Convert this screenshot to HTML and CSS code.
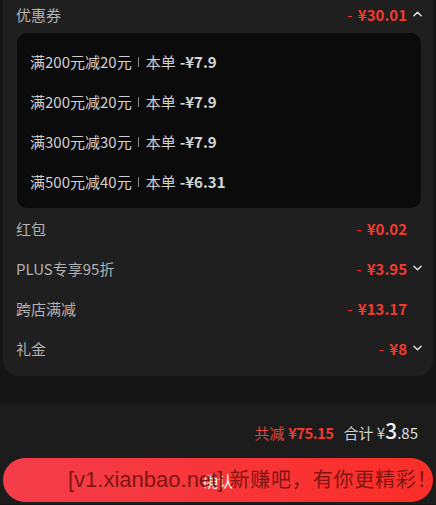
FILE: index.html
```html
<!DOCTYPE html>
<html lang="zh-CN">
<head>
    <meta charset="UTF-8">
    <meta name="viewport" content="width=device-width, initial-scale=1.0">
    <title>优惠明细</title>
    <link rel="stylesheet" href="styles.css">
</head>
<body>
    <div class="card">
        <div class="row head">
            <span class="label">优惠券</span>
            <span class="amount">- <b>¥30.01</b></span>
            <svg class="arrow" viewBox="0 0 10 6"><polyline points="1,5 5,1 9,5"/></svg>
        </div>

        <div class="coupons">
            <div class="coupon">满200元减20元<i class="sep"></i>本单 <b>-¥7.9</b></div>
            <div class="coupon">满200元减20元<i class="sep"></i>本单 <b>-¥7.9</b></div>
            <div class="coupon">满300元减30元<i class="sep"></i>本单 <b>-¥7.9</b></div>
            <div class="coupon">满500元减40元<i class="sep"></i>本单 <b>-¥6.31</b></div>
        </div>

        <div class="row">
            <span class="label">红包</span>
            <span class="amount">- <b>¥0.02</b></span>
            <span class="arrow-space"></span>
        </div>
        <div class="row">
            <span class="label">PLUS专享95折</span>
            <span class="amount">- <b>¥3.95</b></span>
            <svg class="arrow" viewBox="0 0 10 6"><polyline points="1,1 5,5 9,1"/></svg>
        </div>
        <div class="row">
            <span class="label">跨店满减</span>
            <span class="amount">- <b>¥13.17</b></span>
            <span class="arrow-space"></span>
        </div>
        <div class="row">
            <span class="label">礼金</span>
            <span class="amount">- <b>¥8</b></span>
            <svg class="arrow" viewBox="0 0 10 6"><polyline points="1,1 5,5 9,1"/></svg>
        </div>
    </div>

    <div class="footer">
        <div class="total">
            <span class="saved">共减 <b>¥75.15</b></span>
            <span class="sum">合计 <span class="yen">¥</span><b>3</b><span class="cents">.85</span></span>
        </div>
        <div class="btn-wrap">
            <button class="confirm">确认</button>
            <div class="watermark">[v1.xianbao.net] <span class="wm-cn">新赚吧，有你更精彩！</span></div>
        </div>
    </div>
</body>
</html>
```

FILE: styles.css
```css
body {
    margin: 0;
    background: #151515;
    font-family: "Noto Sans CJK SC", "Noto Sans", sans-serif;
    color: #bdbdbd;
    width: 436px;
    height: 505px;
    overflow: hidden;
}
.card {
    margin: 0 3px;
    background: #1f1f1f;
    border-radius: 0 0 16px 16px;
    padding: 0 0 8px;
}
.row {
    display: flex;
    align-items: center;
    height: 40px;
    padding: 0 11px 0 13px;
    font-size: 15px;
}
.row.head {
    height: 28px;
}
.label {
    flex: 1;
    color: #b3b3b3;
}
.amount {
    color: #f2352c;
    word-spacing: 2px;
}
.amount b {
    color: #f43a2f;
}
.arrow, .arrow-space {
    width: 9px;
    height: 6px;
    margin-left: 6px;
}
.arrow polyline {
    fill: none;
    stroke: #e6e6e6;
    stroke-width: 1.6;
    stroke-linecap: round;
    stroke-linejoin: round;
}
.coupons {
    margin: 5px 12px 0 14px;
    background: #0b0b0b;
    border-radius: 10px;
    padding: 8px 0 7px;
}
.coupon {
    height: 40px;
    display: flex;
    align-items: center;
    padding-left: 13px;
    font-size: 15px;
    color: #cfcfcf;
}
.coupon b {
    margin-left: 4px;
    color: #d6d6d6;
}
.sep {
    display: inline-block;
    width: 1px;
    height: 10px;
    background: #8a8a8a;
    margin: 2px 7px 0 6px;
}
.footer {
    margin-top: 29px;
    background: #1c1c1c;
    height: 99px;
    padding-top: 10px;
    box-sizing: border-box;
}
.total {
    display: flex;
    justify-content: flex-end;
    align-items: baseline;
    padding-right: 18px;
    height: 22px;
    font-size: 15px;
}
.saved {
    color: #e0453a;
}
.saved b {
    color: #ee3a2e;
    letter-spacing: -0.6px;
}
.sum {
    margin-left: 10px;
    color: #d0d0d0;
}
.sum b {
    font-size: 21px;
    font-weight: 500;
    color: #f0f0f0;
}
.sum .cents {
    font-size: 15px;
    color: #e0e0e0;
}
.btn-wrap {
    position: relative;
    margin: 21px 3px 0;
}
.confirm {
    display: block;
    width: 100%;
    height: 44px;
    border: none;
    border-radius: 22px;
    background: linear-gradient(90deg, #f43d4a, #fb2e27);
    color: #ffffff;
    font-family: inherit;
    font-size: 15px;
}
.watermark {
    position: absolute;
    left: 65px;
    top: 9px;
    font-family: "Liberation Sans", "Noto Sans CJK SC", sans-serif;
    font-size: 22px;
    line-height: 26px;
    color: #7e1616;
    white-space: nowrap;
}
.wm-cn {
    font-size: 20px;
    letter-spacing: 0.8px;
}
```
